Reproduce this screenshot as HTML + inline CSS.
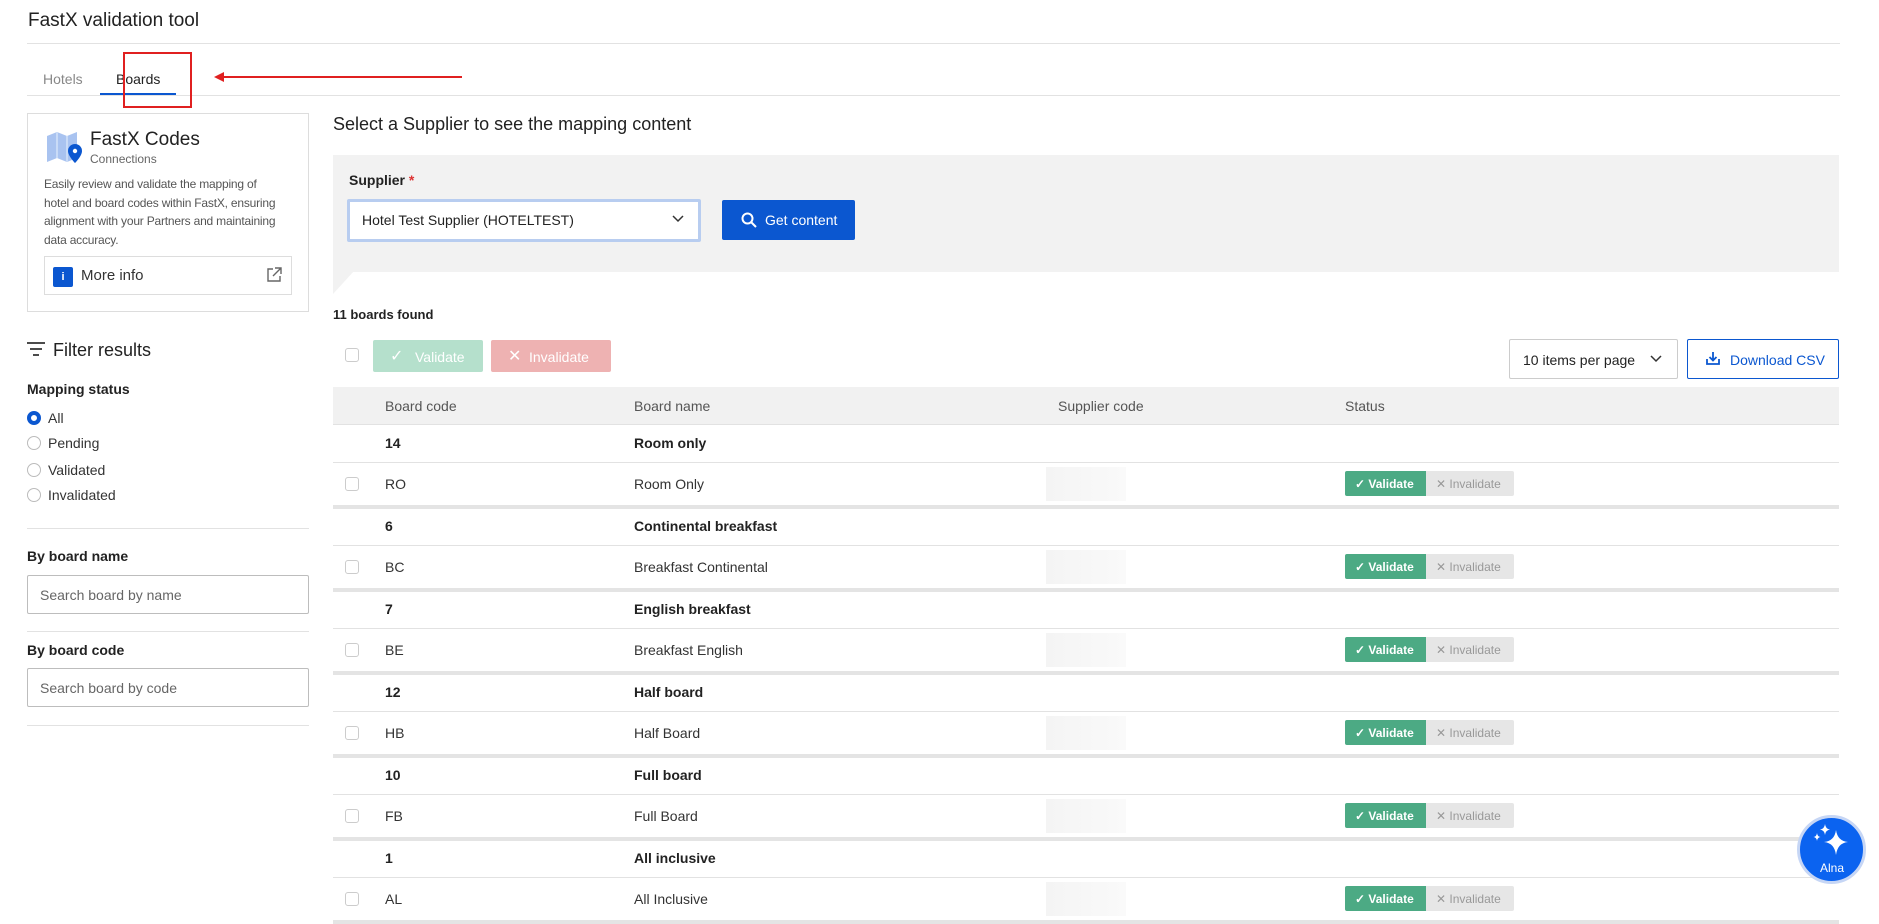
<!DOCTYPE html>
<html><head><meta charset="utf-8"><style>
*{box-sizing:border-box;margin:0;padding:0}
body{width:1879px;height:899px;overflow:hidden;background:#fff;font-family:"Liberation Sans",Arial,sans-serif;color:#222;position:relative}
.a{position:absolute}
.hl{position:absolute;height:1px;background:#e2e2e2}
.radio{position:absolute;left:27px;width:14px;height:14px;border:1px solid #bbb;border-radius:50%}
.rl{position:absolute;left:48px;font-size:14px;color:#333}
.inp{position:absolute;left:27px;width:282px;height:39px;border:1px solid #bdbdbd;border-radius:2px;font-size:14px;color:#666;padding:11px 12px}
.cb{position:absolute;left:345px;width:14px;height:14px;border:1px solid #ccc;border-radius:3px}
.td{position:absolute;font-size:14px;color:#333}
.b{font-weight:bold;color:#222}
.val{position:absolute;left:1345px;width:81px;height:25px;background:#4caa84;color:#fff;font-size:12px;font-weight:bold;border-radius:2px 0 0 2px;padding:6px 0 0 10px}
.inv{position:absolute;left:1426px;width:88px;height:25px;background:#e6e6e6;color:#999;font-size:12px;border-radius:0 2px 2px 0;padding:6px 0 0 10px}
.blob{position:absolute;left:1046px;width:80px;height:34px;background:linear-gradient(90deg,#f4f4f4,#fafafa)}
</style></head><body>
<div class="a" style="left:28px;top:10px;font-size:19px;color:#222">FastX validation tool</div>
<div class="hl" style="left:27px;top:43px;width:1813px"></div>
<div class="a" style="left:43px;top:71px;font-size:14px;color:#888">Hotels</div>
<div class="a" style="left:116px;top:71px;font-size:14px;color:#222">Boards</div>
<div class="a" style="left:100px;top:93px;width:76px;height:3px;background:#0b57d0"></div>
<div class="hl" style="left:27px;top:95px;width:1813px"></div>
<div class="a" style="left:123px;top:52px;width:69px;height:56px;border:2px solid #e02020"></div>
<div class="a" style="left:222px;top:76px;width:240px;height:2px;background:#e02020"></div>
<div class="a" style="left:214px;top:72px;width:0;height:0;border-top:5px solid transparent;border-bottom:5px solid transparent;border-right:10px solid #e02020"></div>

<div class="a" style="left:27px;top:113px;width:282px;height:199px;border:1px solid #ddd"></div>
<svg class="a" style="left:45px;top:130px" width="42" height="36" viewBox="0 0 42 36"><path d="M2 6 L12 2 L22 6 L32 2 L32 28 L22 32 L12 28 L2 32Z" fill="#a9c3f0"/><path d="M12 2 L12 28 M22 6 L22 32" stroke="#c9dbf7" stroke-width="2"/><path d="M30 14a7 7 0 0 1 7 7c0 5-7 12-7 12s-7-7-7-12a7 7 0 0 1 7-7z" fill="#0b57d0"/><circle cx="30" cy="21" r="2.2" fill="#fff"/></svg>
<div class="a" style="left:90px;top:129px;font-size:19px;color:#222">FastX Codes</div>
<div class="a" style="left:90px;top:152px;font-size:12px;color:#666">Connections</div>
<div class="a" style="left:44px;top:175px;white-space:nowrap;font-size:12px;letter-spacing:-0.2px;line-height:18.5px;color:#555">Easily review and validate the mapping of<br>hotel and board codes within FastX, ensuring<br>alignment with your Partners and maintaining<br>data accuracy.</div>
<div class="a" style="left:44px;top:256px;width:248px;height:39px;border:1px solid #ddd"></div>
<div class="a" style="left:53px;top:267px;width:20px;height:20px;background:#0b57d0;border-radius:2px;color:#fff;font-size:11px;text-align:center;line-height:20px;font-weight:bold">i</div>
<div class="a" style="left:81px;top:267px;font-size:15px;color:#333">More info</div>
<svg class="a" style="left:266px;top:267px" width="16" height="16" viewBox="0 0 16 16" fill="none" stroke="#666" stroke-width="1.4"><path d="M7 2H2v12h12V9M9 1h6v6M15 1L7 9"/></svg>

<svg class="a" style="left:27px;top:342px" width="18" height="14"><path d="M0 1h18M3 7h12M6 13h6" stroke="#333" stroke-width="1.8"/></svg>
<div class="a" style="left:53px;top:340px;font-size:18px;color:#222">Filter results</div>
<div class="a" style="left:27px;top:381px;font-size:14px;font-weight:bold;color:#222">Mapping status</div>
<div class="radio" style="top:411px;border:4px solid #0b57d0"></div><div class="rl" style="top:410px">All</div>
<div class="radio" style="top:436px"></div><div class="rl" style="top:435px">Pending</div>
<div class="radio" style="top:463px"></div><div class="rl" style="top:462px">Validated</div>
<div class="radio" style="top:488px"></div><div class="rl" style="top:487px">Invalidated</div>
<div class="hl" style="left:27px;top:528px;width:282px"></div>
<div class="a" style="left:27px;top:548px;font-size:14px;font-weight:bold">By board name</div>
<div class="inp" style="top:575px">Search board by name</div>
<div class="hl" style="left:27px;top:631px;width:282px"></div>
<div class="a" style="left:27px;top:642px;font-size:14px;font-weight:bold">By board code</div>
<div class="inp" style="top:668px">Search board by code</div>
<div class="hl" style="left:27px;top:725px;width:282px"></div>

<div class="a" style="left:333px;top:114px;font-size:18px;color:#222">Select a Supplier to see the mapping content</div>
<div class="a" style="left:333px;top:155px;width:1506px;height:117px;background:#f2f2f2"></div>
<svg class="a" style="left:333px;top:271px" width="21" height="24"><path d="M0 0H21L0 23Z" fill="#f2f2f2"/></svg>
<div class="a" style="left:349px;top:172px;font-size:14px;font-weight:bold;color:#222">Supplier <span style="color:#d33">*</span></div>
<div class="a" style="left:347px;top:199px;width:354px;height:43px;border:3px solid #b8cdf0;background:#fff;border-radius:2px"></div>
<div class="a" style="left:362px;top:212px;font-size:14px;color:#222">Hotel Test Supplier (HOTELTEST)</div>
<svg class="a" style="left:672px;top:215px" width="12" height="8"><path d="M1 1l5 5 5-5" stroke="#333" stroke-width="1.5" fill="none"/></svg>
<div class="a" style="left:722px;top:200px;width:133px;height:40px;background:#0b57d0;border-radius:2px;color:#fff;font-size:14px;padding:12px 0 0 43px">Get content</div>
<svg class="a" style="left:741px;top:212px" width="16" height="16"><circle cx="6.5" cy="6.5" r="5" stroke="#fff" stroke-width="2" fill="none"/><path d="M10 10l5 5" stroke="#fff" stroke-width="2"/></svg>

<div class="a" style="left:333px;top:307px;font-size:13px;font-weight:bold">11 boards found</div>
<div class="cb" style="left:345px;top:348px"></div>
<div class="a" style="left:373px;top:340px;width:110px;height:32px;background:#b5e0cc;border-radius:2px;color:#fff;font-size:14px;padding:9px 0 0 42px">Validate</div>
<div class="a" style="left:390px;top:346px;color:#fff;font-size:16px">✓</div>
<div class="a" style="left:491px;top:340px;width:120px;height:32px;background:#eeb2b2;border-radius:2px;color:#fff;font-size:14px;padding:9px 0 0 38px">Invalidate</div>
<div class="a" style="left:508px;top:346px;color:#fff;font-size:16px">✕</div>
<div class="a" style="left:1509px;top:339px;width:169px;height:40px;border:1px solid #ccc;border-radius:2px;font-size:14px;padding:12px 0 0 13px;color:#222">10 items per page</div>
<svg class="a" style="left:1650px;top:355px" width="12" height="8"><path d="M1 1l5 5 5-5" stroke="#333" stroke-width="1.5" fill="none"/></svg>
<div class="a" style="left:1687px;top:339px;width:152px;height:40px;border:1px solid #0b57d0;border-radius:2px;font-size:14px;padding:12px 0 0 42px;color:#0b57d0">Download CSV</div>
<svg class="a" style="left:1706px;top:351px" width="14" height="14"><path d="M7 1v8M3.5 6L7 9.5 10.5 6M1 8v5h12V8" stroke="#0b57d0" stroke-width="1.8" fill="none"/></svg>

<div class="a" style="left:333px;top:387px;width:1506px;height:38px;background:#f1f1f1;border-bottom:1px solid #e2e2e2"></div>
<div class="td" style="left:385px;top:398px;color:#555">Board code</div>
<div class="td" style="left:634px;top:398px;color:#555">Board name</div>
<div class="td" style="left:1058px;top:398px;color:#555">Supplier code</div>
<div class="td" style="left:1345px;top:398px;color:#555">Status</div>

<div id="rows"></div>
<script>
var d=[["14","Room only","RO","Room Only"],["6","Continental breakfast","BC","Breakfast Continental"],["7","English breakfast","BE","Breakfast English"],["12","Half board","HB","Half Board"],["10","Full board","FB","Full Board"],["1","All inclusive","AL","All Inclusive"]];
var h="";
d.forEach(function(r,i){var y=425+i*83;
h+='<div class="td b" style="left:385px;top:'+(y+10)+'px">'+r[0]+'</div><div class="td b" style="left:634px;top:'+(y+10)+'px">'+r[1]+'</div>';
h+='<div class="hl" style="left:333px;top:'+(y+37)+'px;width:1506px"></div>';
h+='<div class="cb" style="top:'+(y+52)+'px"></div><div class="td" style="left:385px;top:'+(y+51)+'px">'+r[2]+'</div><div class="td" style="left:634px;top:'+(y+51)+'px">'+r[3]+'</div>';
h+='<div class="blob" style="top:'+(y+42)+'px"></div>';
h+='<div class="val" style="top:'+(y+46)+'px">✓ Validate</div><div class="inv" style="top:'+(y+46)+'px">✕ Invalidate</div>';
h+='<div class="a" style="left:333px;top:'+(y+80)+'px;width:1506px;height:4px;background:#e4e4e4"></div>';});
document.getElementById("rows").innerHTML=h;
</script>

<div class="a" style="left:1797px;top:815px;width:69px;height:69px;border-radius:50%;background:#0b63f0;border:3px solid #c6d6f5"></div>
<svg class="a" style="left:1810px;top:820px" width="44" height="42"><path d="M26 10 Q27.5 21 38 22 Q27.5 23 26 35 Q24.5 23 14 22 Q24.5 21 26 10Z" fill="#fff"/><path d="M15 4 Q15.6 9 20 9.6 Q15.6 10.2 15 15 Q14.4 10.2 10 9.6 Q14.4 9 15 4Z" fill="#fff"/><path d="M7 13 Q7.4 16.6 10.5 17 Q7.4 17.4 7 21 Q6.6 17.4 3.5 17 Q6.6 16.6 7 13Z" fill="#fff"/></svg>
<div class="a" style="left:1820px;top:861px;color:#fff;font-size:12px">Alna</div>
</body></html>
